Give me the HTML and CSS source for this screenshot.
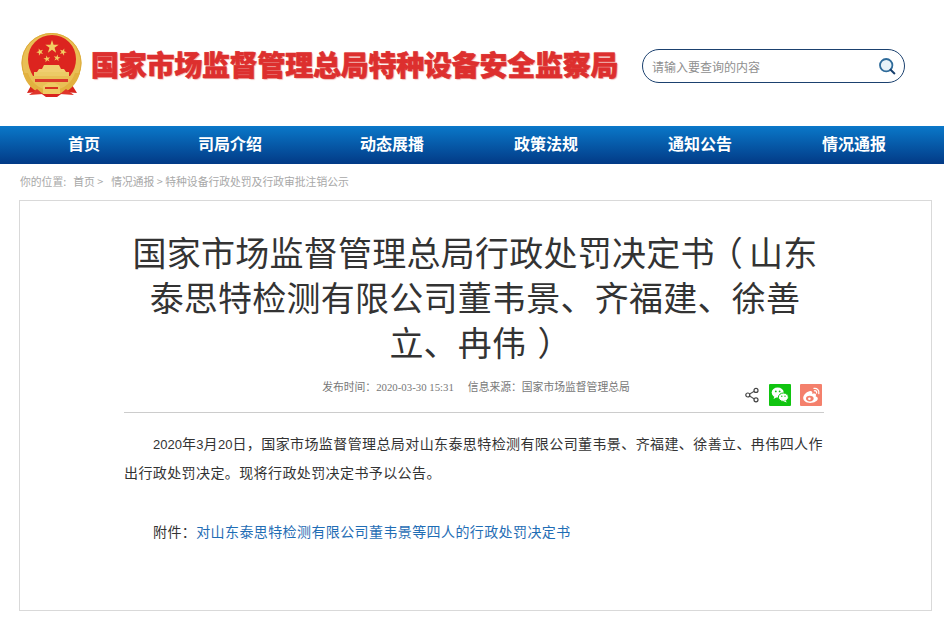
FILE: index.html
```html
<!DOCTYPE html>
<html lang="zh-CN">
<head>
<meta charset="utf-8">
<title>国家市场监督管理总局行政处罚决定书</title>
<link rel="stylesheet" href="styles.css">
</head>
<body>
<header class="header">
  <div class="brand">
    <svg class="emblem" viewBox="0 0 64 66" width="64" height="66" aria-hidden="true">
      <defs>
        <polygon id="star" points="0,-1 .224,-.309 .951,-.309 .363,.118 .588,.809 0,.382 -.588,.809 -.363,.118 -.951,-.309 -.224,-.309"/>
      </defs>
      <path d="M15 47 L8 60 L20 59 L27 64 L38 64 L45 59 L58 60 L50 47 Z" fill="#d9241e"/>
      <circle cx="32.5" cy="30" r="30" fill="#e9bf55"/>
      <circle cx="32.5" cy="30" r="29.5" fill="none" stroke="#dcab3a" stroke-width="1"/>
      <path d="M9 26 A24 24 0 0 1 57 26 C57 32 55 38 51 43 L14 43 C11 38 9 32 9 26 Z" fill="#dc241f"/>
      <g fill="#f2cf63">
        <use href="#star" transform="translate(33 14) scale(7)"/>
        <use href="#star" transform="translate(21 19) rotate(-20) scale(3.8)"/>
        <use href="#star" transform="translate(44 19) rotate(20) scale(3.8)"/>
        <use href="#star" transform="translate(28 26) rotate(-10) scale(3.6)"/>
        <use href="#star" transform="translate(38 25) rotate(10) scale(3.6)"/>
      </g>
      <path d="M23 36 L25 32 L40 32 L42 36 L45 36 L47 39 L18 39 L20 36 Z" fill="#f0cf70"/>
      <rect x="15" y="39" width="35" height="4" fill="#eccb66"/>
      <rect x="16" y="46" width="33" height="3" fill="#dc3a2a"/>
      <path d="M9 40 C12 50 20 55 28 57 L37 57 C45 55 53 50 56 40 L61 40 C58 51 50 59 40 61 L25 61 C15 59 7 51 4 40 Z" fill="#e2b13f"/>
      <path d="M24 53 L29 50 L36 50 L41 53 L41 61 L24 61 Z" fill="#eecb63"/>
      <path d="M18 56 L10 62 L24 61 Z M47 56 L55 62 L41 61 Z" fill="#e0352a"/>
      <rect x="26" y="54" width="13" height="2" fill="#d8351f"/>
    </svg>
    <span class="brand-name">国家市场监督管理总局特种设备安全监察局</span>
  </div>
  <div class="search">
    <span class="search-hint">请输入要查询的内容</span>
    <svg class="search-icon" viewBox="0 0 18 18" width="18" height="18" aria-hidden="true">
      <circle cx="8.2" cy="8.2" r="6.2" fill="#e9f2f8" stroke="#2f6b9a" stroke-width="1.8"/>
      <path d="M12.6 12.8 L16.4 16.4" stroke="#173f6d" stroke-width="2" stroke-linecap="round"/>
    </svg>
  </div>
</header>

<nav class="nav">
  <a class="nav-item nav-wide">首页</a>
  <a class="nav-item nav-wide">司局介绍</a>
  <a class="nav-item">动态展播</a>
  <a class="nav-item">政策法规</a>
  <a class="nav-item">通知公告</a>
  <a class="nav-item">情况通报</a>
</nav>

<div class="crumbs">
  <span class="crumb-label">你的位置:</span>
  <span>首页 &gt;</span>
  <span class="crumb-tail">情况通报 &gt; 特种设备行政处罚及行政审批注销公示</span>
</div>

<main class="card">
  <article class="article">
    <h1 class="title"><span>国家市场监督管理总局行政处罚决定书</span><span class="paren">（</span><span>山东</span><span>泰思特检测有限公司董韦景、齐福建、徐善</span><span>立、冉伟</span><span class="paren">）</span></h1>
    <div class="meta">
      <span class="meta-text">发布时间：2020-03-30 15:31</span>
      <span class="meta-text">信息来源：国家市场监督管理总局</span>
      <div class="share">
        <svg class="share-link" viewBox="0 0 16 16" width="16" height="16" aria-hidden="true">
          <path d="M11.5 3.5 L4 8 L11.5 12.7" fill="none" stroke="#555" stroke-width="1.1"/>
          <circle cx="12" cy="3.4" r="2" fill="#fff" stroke="#444" stroke-width="1.2"/>
          <circle cx="3.8" cy="8" r="2" fill="#fff" stroke="#444" stroke-width="1.2"/>
          <circle cx="12" cy="12.8" r="2" fill="#fff" stroke="#444" stroke-width="1.2"/>
        </svg>
        <svg class="share-box" viewBox="0 0 22 22" width="22" height="22" aria-hidden="true">
          <rect width="22" height="22" rx="1" fill="#10c410"/>
          <ellipse cx="8.7" cy="8.6" rx="6" ry="5" fill="#fff"/>
          <path d="M5.5 12 L4.6 15 L8 13 Z" fill="#fff"/>
          <ellipse cx="14.4" cy="13.2" rx="5" ry="4.2" fill="#fff" stroke="#10c410" stroke-width="1"/>
          <path d="M16.5 16.5 L17.8 18.6 L14.6 17.2 Z" fill="#fff"/>
          <circle cx="6.8" cy="7.4" r=".9" fill="#10c410"/>
          <circle cx="10.6" cy="7.4" r=".9" fill="#10c410"/>
          <circle cx="12.8" cy="12.2" r=".7" fill="#10c410"/>
          <circle cx="16" cy="12.2" r=".7" fill="#10c410"/>
        </svg>
        <svg class="share-box" viewBox="0 0 22 22" width="22" height="22" aria-hidden="true">
          <rect width="22" height="22" rx="1" fill="#f4806c"/>
          <path d="M3.2 13.8 C3.2 10.6 8 6.6 10.8 7 C12.6 7.3 12.6 8.8 12 10 C14 9.2 16 9.6 16 11 C16 11.6 15.8 12 15.6 12.3 C17 12.7 17.8 13.6 17.8 14.6 C17.8 17 14.2 19 10.2 19 C6.4 19 3.2 17 3.2 13.8 Z" fill="#fff"/>
          <ellipse cx="9.8" cy="14.6" rx="3.8" ry="2.8" fill="#f4806c"/>
          <circle cx="9.4" cy="14.8" r="1.3" fill="#fff"/>
          <path d="M14 4.4 C17 3.8 19.6 6.4 18.8 9.6 M14.4 6.8 C15.8 6.4 17 7.6 16.6 9" fill="none" stroke="#fff" stroke-width="1.3" stroke-linecap="round"/>
        </svg>
      </div>
    </div>
    <div class="body">
      <p class="para"><span class="num">2020</span><span>年</span><span class="num">3</span><span>月</span><span class="num">20</span><span>日，国家市场监督管理总局对山东泰思特检测有限公司董韦景、齐福建、徐善立、冉伟四人作</span><span>出行政处罚决定。现将行政处罚决定书予以公告。</span></p>
      <p class="para attach"><span>附件：</span><a class="attach-link">对山东泰思特检测有限公司董韦景等四人的行政处罚决定书</a></p>
    </div>
  </article>
</main>
</body>
</html>
```

FILE: styles.css
```css
* { box-sizing: border-box; }
html, body { margin: 0; padding: 0; }
body {
  background: #fff;
  color: #333;
  font-family: "Liberation Sans", "Noto Sans CJK SC", sans-serif;
  width: 944px;
  height: 620px;
  overflow: hidden;
}
.header {
  height: 126px;
  display: flex;
  align-items: center;
  justify-content: space-between;
  padding: 6px 39px 0 19px;
}
.brand { display: flex; align-items: center; gap: 8px; }
.emblem { display: block; }
.brand-name {
  font-family: "Noto Sans CJK SC", sans-serif;
  font-size: 28px;
  font-weight: 900;
  letter-spacing: -0.25px;
  color: #dd2f2e;
  white-space: nowrap;
  margin-bottom: 4px;
  -webkit-text-stroke: 0.5px #dd2f2e;
  text-shadow: 0 0 1px #ee8a85, 1px 1px 1px #f0b5b0;
}
.search {
  width: 263px;
  height: 34px;
  border: 1.5px solid #1b416f;
  border-radius: 17px;
  display: flex;
  align-items: center;
  justify-content: space-between;
  padding: 0 8px 0 9px;
}
.search-hint { font-size: 12px; color: #8f8f8f; }
.search-icon { display: block; }
.nav {
  height: 38px;
  background: linear-gradient(#0a78c9, #023a86);
  display: flex;
  align-items: center;
  gap: 90px;
  padding: 0 0 4px 68px;
}
.nav-item {
  font-family: "Noto Sans CJK SC", sans-serif;
  font-size: 16px;
  font-weight: 700;
  color: #fff;
  white-space: nowrap;
}
.nav-wide { margin-right: 8px; }
.crumbs {
  height: 36px;
  display: flex;
  align-items: center;
  padding: 0 0 2px 20px;
  font-family: "Noto Sans CJK SC", sans-serif;
  font-size: 10.8px;
  color: #a8a8a8;
  white-space: nowrap;
}
.crumb-label { margin-right: 7px; }
.crumb-tail { margin-left: 8px; }
.card {
  width: 913px;
  height: 411px;
  margin-left: 19px;
  border: 1px solid #d9d9d9;
}
.article { width: 700px; margin-left: 104px; }
.title {
  margin: 28px 0 0;
  padding-left: 2px;
  font-family: "Noto Sans CJK SC", sans-serif;
  font-size: 34px;
  font-weight: 400;
  letter-spacing: 0.25px;
  line-height: 45px;
  text-align: center;
  color: #333;
}
.paren {
  font-feature-settings: "halt";
  margin: 0 6px 0 11px;
}
.meta {
  position: relative;
  height: 42px;
  margin-top: 7px;
  display: flex;
  justify-content: center;
  gap: 14px;
  padding: 8px 0 0 4px;
  border-bottom: 1px solid #ccc;
}
.meta-text {
  font-family: "Liberation Serif", "Noto Sans CJK SC", serif;
  font-size: 10.8px;
  line-height: 16px;
  color: #777;
}
.share {
  position: absolute;
  right: 2px;
  top: 13px;
  display: flex;
  align-items: center;
  gap: 9px;
}
.share-box { display: block; }
.body { padding-top: 17px; }
.para {
  margin: 0;
  font-size: 14px;
  letter-spacing: 0.4px;
  line-height: 29px;
  text-indent: 29px;
  color: #333;
}
.num { font-size: 13px; letter-spacing: 0; }
.attach { margin-top: 30px; }
.attach-link { color: #1f6db5; }
```
